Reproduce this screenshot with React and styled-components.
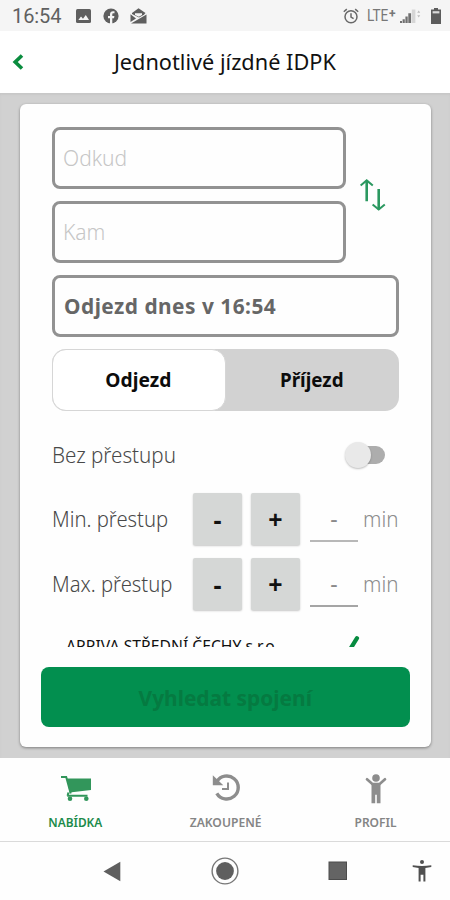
import { useState } from "react"
import styled, { createGlobalStyle } from "styled-components"

const GlobalStyle = createGlobalStyle`
  * {
    box-sizing: border-box;
  }

  body {
    margin: 0;
    background: #fefefe;
    font-family: "Noto Sans", "Open Sans", sans-serif;
  }

  button, input {
    font-family: inherit;
    padding: 0;
    margin: 0;
    outline: none;
  }
`

const Screen = styled.div`
  width: 450px;
  height: 900px;
  display: flex;
  flex-direction: column;
  overflow: hidden;
  background: #fefefe;
`

const Label = styled.span`
  display: inline-block;
  white-space: nowrap;
  transform: scaleX(${({ $sx }) => $sx || 1});
  transform-origin: ${({ $from }) => $from || "center"};
`

const StatusBar = styled.div`
  height: 31px;
  flex-shrink: 0;
  background: #f5f5f5;
  display: flex;
  align-items: center;
  justify-content: space-between;
  padding: 1px 9px 0 12px;
  color: #606060;
  font-family: Roboto, sans-serif;
`

const StatusGroup = styled.div`
  display: flex;
  align-items: center;

  svg {
    display: block;
  }
`

const Clock = styled.div`
  width: 64px;
  font-size: 20px;
  line-height: 30px;
  letter-spacing: -0.1px;
`

const Network = styled.div`
  width: 33px;
  margin-left: 8px;
  font-size: 16px;
  line-height: 30px;
  color: #777;
  display: flex;

  sup {
    font-size: 12px;
    line-height: 27px;
    font-weight: 700;
    margin-left: -3px;
  }
`

const Header = styled.header`
  height: 62px;
  flex-shrink: 0;
  display: grid;
  grid-template-columns: 36px 1fr 36px;
  align-items: center;
  background: #fff;

  h1 {
    margin: 0;
    text-align: center;
    font-size: 21.5px;
    font-weight: 400;
    line-height: 30px;
    color: #111;
  }
`

const BackButton = styled.button`
  border: 0;
  background: none;
  padding-left: 11px;
  height: 40px;
  display: flex;
  align-items: center;
`

const Main = styled.main`
  height: 665px;
  flex-shrink: 0;
  padding: 11px 19px 11px 20px;
  background: #d1d1d1;
  box-shadow: inset 0 2px 2px #c8c8c8;
`

const Card = styled.div`
  height: 643px;
  background: #fefefe;
  border-radius: 6px;
  box-shadow: 0 1px 3px rgba(0, 0, 0, 0.4);
  display: flex;
  flex-direction: column;
`

const ScrollArea = styled.div`
  height: 543px;
  overflow: hidden;
  padding: 22.5px 32px 0;
`

const Route = styled.div`
  display: flex;
  align-items: center;
  gap: 14px;
`

const RouteFields = styled.div`
  width: 294px;
  display: grid;
  gap: 12px;
`

const Field = styled.div`
  height: 62px;
  border: 3px solid #929292;
  border-radius: 8px;
  padding: 1px 7px 0 8px;
  display: flex;
  align-items: center;
  font-size: 21px;
  font-weight: 300;
  background: #fefefe;

  input {
    width: 100%;
    border: 0;
    background: none;
    font-size: inherit;
    font-weight: inherit;

    &::placeholder {
      color: #c6c6c6;
      opacity: 1;
    }
  }
`

const DepartureField = styled(Field)`
  margin-top: 12px;
  padding: 0 9px 1px;
  font-size: 21.5px;
  font-weight: 700;
  letter-spacing: 0.5px;
  color: #666;
`

const SwapButton = styled.button`
  border: 0;
  background: none;
  height: 32px;
`

const Segmented = styled.div`
  height: 62px;
  margin: 12px 0;
  border-radius: 14px;
  background: #d2d2d2;
  display: grid;
  grid-template-columns: 1fr 1fr;
`

const Segment = styled.button`
  border: 1px solid ${({ $active }) => ($active ? "#d6d6d6" : "transparent")};
  border-radius: 14px;
  background: ${({ $active }) => ($active ? "#fff" : "transparent")};
  font-size: 20px;
  font-weight: 700;
  color: #0c0c0c;
`

const Row = styled.div`
  height: ${({ $h }) => $h}px;
  display: flex;
  align-items: center;
  font-size: 21px;
  font-weight: 300;
  color: #484848;
`

const RowLabel = styled.div`
  width: 141px;
`

const Switch = styled.button`
  margin-left: auto;
  margin-right: 14px;
  width: 40px;
  height: 26px;
  border: 0;
  background: none;
  display: flex;
  align-items: center;

  &::before {
    content: "";
    width: 26px;
    height: 26px;
    flex-shrink: 0;
    border-radius: 50%;
    background: #e9e9e9;
    box-shadow: 0 1px 2px rgba(0, 0, 0, 0.25);
    z-index: 1;
  }

  &::after {
    content: "";
    width: 30px;
    height: 18px;
    flex-shrink: 0;
    margin-left: -16px;
    border-radius: 9px;
    background: #adadad;
  }
`

const Steppers = styled.div`
  display: grid;
  gap: 13px;
  padding-top: 6px;
`

const StepButton = styled.button`
  width: 49px;
  height: 52px;
  margin-right: 9px;
  border: 0;
  border-radius: 2px;
  background: #d5d7d6;
  box-shadow: 0 1px 2px rgba(0, 0, 0, 0.22);
  display: flex;
  align-items: center;
  justify-content: center;
  font-size: 25px;
  font-weight: 700;
  line-height: 30px;
  color: #111;
`

const Minutes = styled.div`
  width: 48px;
  height: 44px;
  margin: 2px 5px 0 1px;
  padding-bottom: 2px;
  border-bottom: 2px solid ${({ $dark }) => ($dark ? "#a5a5a5" : "#b8b8b8")};
  display: flex;
  align-items: center;
  justify-content: center;
  font-size: 23px;
  font-weight: 400;
  color: #8a8a8a;
`

const Unit = styled.div`
  color: #8c8c8c;
`

const Operator = styled.div`
  display: flex;
  align-items: flex-start;
  justify-content: space-between;
  padding: 25px 39px 0 14px;
  font-size: 16px;
  line-height: 22px;
  color: #111;
`

const Submit = styled.button`
  height: 60px;
  margin: 20px 21px 0 21px;
  border: 0;
  border-radius: 8px;
  background: #028f4f;
  font-size: 22px;
  font-weight: 700;
  color: #057a41;
`

const TabBar = styled.nav`
  height: 84px;
  flex-shrink: 0;
  display: grid;
  grid-template-columns: repeat(3, 1fr);
  border-bottom: 1px solid #dadada;
`

const Tab = styled.div`
  display: grid;
  grid-template-rows: 41px 18px;
  justify-items: center;
  align-content: start;
  padding: 15px 0 0 1px;
  font-size: 12px;
  font-weight: 600;
  line-height: 18px;
  color: ${({ $active }) => ($active ? "#1c8b4b" : "#858585")};

  svg {
    display: block;
  }
`

const SystemBar = styled.div`
  height: 58px;
  display: grid;
  grid-template-columns: 168px 114px 112px 56px;
  align-items: center;

  svg {
    display: block;
    justify-self: center;
  }

  svg:first-child {
    justify-self: end;
    margin-right: 47px;
  }
`

const PhotoIcon = () => (
  <svg width="15" height="14" viewBox="0 0 15 14">
    <rect width="15" height="14" rx="1.5" fill="#5f5f5f" />
    <path d="M2.3 11 5 7.4l2 2.3L9.8 6 13 11z" fill="#f5f5f5" />
  </svg>
)

const FacebookIcon = styled(({ className }) => (
  <svg className={className} width="16" height="16" viewBox="0 0 16 16">
    <circle cx="8" cy="8" r="7.6" fill="#5f5f5f" />
    <path d="M7 16v-5.8H5V8h2V6.3C7 4.2 8.2 3.2 10 3.2h1.5v2H10.4c-.8 0-1.1.4-1.1 1.1V8h2.1l-.4 2.2H9.3V16z" fill="#f5f5f5" />
  </svg>
))`
  margin-left: 12px;
`

const MailIcon = styled(({ className }) => (
  <svg className={className} width="17" height="16" viewBox="0 0 17 16">
    <path d="M8.5.3 15.5 5 14 6.8 9 9.6 2 6V5z" fill="#5f5f5f" />
    <path d="M5 5.2h7v1.8L8.8 8.8 5 7z" fill="#f5f5f5" />
    <path d="M.5 6.2 6 10.6.5 14z" fill="#5f5f5f" />
    <path d="M1 15.6 16.5 6.5v9.1z" fill="#5f5f5f" />
  </svg>
))`
  margin-left: 11px;
`

const AlarmIcon = () => (
  <svg width="16" height="16" viewBox="0 0 16 16" fill="none" stroke="#686868" strokeWidth="1.5">
    <circle cx="8" cy="8.8" r="6" />
    <path d="M8 5.2v3.9l2.6 1.6M.8 3.8 3.8 1.1M15.2 3.8l-3-2.7" />
  </svg>
)

const SignalIcon = () => (
  <svg width="22" height="16" viewBox="0 0 22 16">
    <path d="M0 13h2v2H0zM2.6 11.3h2.2V15H2.6zM5.4 8.6h2.3V15H5.4zM8.3 5.2h2.8V15H8.3z" fill="#707070" />
    <path d="M11.8 1.5h3.6V15h-3.6z" fill="#d6d6d6" />
    <path d="M17.2 4.8 18.7 2.5l1.5 2.3zM17.2 7.2h3l-1.5 2.3z" fill="#bcbcbc" />
  </svg>
)

const BatteryIcon = styled(({ className }) => (
  <svg className={className} width="10" height="16" viewBox="0 0 10 16">
    <path d="M3 0h4v1.5h3V16H0V1.5h3z" fill="#5c5c5c" />
    <path d="M1.6 3.2h6.8v2.2H1.6z" fill="#d9d9d9" />
  </svg>
))`
  margin-left: 9px;
`

const ChevronIcon = () => (
  <svg width="14" height="16" viewBox="0 0 14 16" fill="none" stroke="#0a8c3e" strokeWidth="3.6">
    <path d="M11 1.5 4.2 8l6.8 6.5" />
  </svg>
)

const SwapIcon = () => (
  <svg width="26" height="32" viewBox="0 0 26 32" fill="none" stroke="#2b9860" strokeWidth="2">
    <path d="M6.7 1.6v20.6M18.7 10v20.4" strokeWidth="2.6" />
    <path d="M.6 6.5 6.7 1.4l6.1 5.1M12.6 25.4l6.1 5.1 6.1-5.1" />
  </svg>
)

const CheckIcon = () => (
  <svg width="20" height="18" viewBox="0 0 20 18">
    <path d="M17 3.2 9.8 14.8 4 16" fill="none" stroke="#078b40" strokeWidth="4.2" strokeLinejoin="round" strokeLinecap="round" />
  </svg>
)

const CartIcon = () => (
  <svg width="32" height="30" viewBox="0 0 32 30">
    <path d="M1 4.1h5.2l4.5 16.5M8.4 19.5l-.8 3.3M7.2 22.8h20.3" fill="none" stroke="#32965b" strokeWidth="2" />
    <path d="M6.8 5.5H31V17L9.7 19.5z" fill="#32965b" />
    <circle cx="10" cy="25.7" r="2.3" fill="#32965b" />
    <circle cx="26.3" cy="25.7" r="2.3" fill="#32965b" />
  </svg>
)

const HistoryIcon = () => (
  <svg width="28" height="30" viewBox="0 0 28 30" fill="none" stroke="#8d8d8d">
    <path d="M4.8 8.7A11.5 11.5 0 1 1 4.8 20.3" strokeWidth="3.4" />
    <path d="M.8 2.2v10h10.5z" fill="#8d8d8d" stroke="none" />
    <path d="M16 9.5v6.6h-6" strokeWidth="2" />
  </svg>
)

const PersonIcon = () => (
  <svg width="22" height="32" viewBox="0 0 22 32">
    <circle cx="11" cy="5" r="3.8" fill="#8d8d8d" />
    <path d="M2 6.3 7.3 11h7.4L20 6.3" fill="none" stroke="#8d8d8d" strokeWidth="2.7" strokeLinecap="round" />
    <path d="M6.5 10h9v20.3h-3.7v-8.6h-1.6v8.6H6.5z" fill="#8d8d8d" />
  </svg>
)

const TriangleIcon = () => (
  <svg width="18" height="21" viewBox="0 0 18 21">
    <path d="M17.3.8v19.4L.5 10.5z" fill="#5f5f5f" />
  </svg>
)

const HomeIcon = () => (
  <svg width="28" height="28" viewBox="0 0 28 28">
    <circle cx="14" cy="14" r="12.9" fill="none" stroke="#777" strokeWidth="1.4" />
    <circle cx="14" cy="14" r="8.9" fill="#5f5f5f" />
  </svg>
)

const SquareIcon = () => (
  <svg width="20" height="20" viewBox="0 0 20 20">
    <rect x="1" y="1" width="17.5" height="17.5" fill="#646464" stroke="#4c4c4c" />
  </svg>
)

const AccessibilityIcon = () => (
  <svg width="20" height="22" viewBox="0 0 20 22" fill="#505050">
    <circle cx="10" cy="2" r="2" />
    <path d="M.7 5.2Q10 6.8 19.3 5.2v1.7L13.4 8v13.6h-2v-6.9H8.6v6.9h-2V8L.7 6.9z" />
  </svg>
)

function Stepper({ label, dark }) {
  const [value, setValue] = useState(null)

  return (
    <Row $h={52}>
      <RowLabel>
        <Label $sx={0.965} $from="left">{label}</Label>
      </RowLabel>
      <StepButton onClick={() => setValue(value ? value - 1 : null)}>-</StepButton>
      <StepButton onClick={() => setValue((value || 0) + 1)}>+</StepButton>
      <Minutes $dark={dark}>{value ?? "-"}</Minutes>
      <Unit>
        <Label $sx={0.98} $from="left">min</Label>
      </Unit>
    </Row>
  )
}

export default function App() {
  const [direction, setDirection] = useState("departure")

  return (
    <Screen>
      <GlobalStyle />
      <StatusBar>
        <StatusGroup>
          <Clock>16:54</Clock>
          <PhotoIcon />
          <FacebookIcon />
          <MailIcon />
        </StatusGroup>
        <StatusGroup>
          <AlarmIcon />
          <Network>
            <Label $sx={0.85} $from="left">LTE</Label>
            <sup>+</sup>
          </Network>
          <SignalIcon />
          <BatteryIcon />
        </StatusGroup>
      </StatusBar>

      <Header>
        <BackButton>
          <ChevronIcon />
        </BackButton>
        <h1>
          <Label $sx={1.01}>Jednotlivé jízdné IDPK</Label>
        </h1>
      </Header>

      <Main>
        <Card>
          <ScrollArea>
            <Route>
              <RouteFields>
                <Field>
                  <input placeholder="Odkud" />
                </Field>
                <Field>
                  <input placeholder="Kam" />
                </Field>
              </RouteFields>
              <SwapButton>
                <SwapIcon />
              </SwapButton>
            </Route>

            <DepartureField>
              <Label $sx={0.97} $from="left">Odjezd dnes v 16:54</Label>
            </DepartureField>

            <Segmented>
              <Segment $active={direction === "departure"} onClick={() => setDirection("departure")}>
                <Label $sx={0.96}>Odjezd</Label>
              </Segment>
              <Segment $active={direction === "arrival"} onClick={() => setDirection("arrival")}>
                <Label $sx={0.94}>Příjezd</Label>
              </Segment>
            </Segmented>

            <Row $h={64}>
              <Label $sx={0.98} $from="left">Bez přestupu</Label>
              <Switch />
            </Row>
            <Steppers>
              <Stepper label="Min. přestup" />
              <Stepper label="Max. přestup" dark />
            </Steppers>

            <Operator>
              <Label $sx={0.98} $from="left">ARRIVA STŘEDNÍ ČECHY s.r.o.</Label>
              <CheckIcon />
            </Operator>
          </ScrollArea>

          <Submit>
            <Label $sx={0.95}>Vyhledat spojení</Label>
          </Submit>
        </Card>
      </Main>

      <TabBar>
        <Tab $active>
          <CartIcon />
          <Label $sx={0.99}>NABÍDKA</Label>
        </Tab>
        <Tab>
          <HistoryIcon />
          <Label $sx={1.01}>ZAKOUPENÉ</Label>
        </Tab>
        <Tab>
          <PersonIcon />
          <Label $sx={1}>PROFIL</Label>
        </Tab>
      </TabBar>

      <SystemBar>
        <TriangleIcon />
        <HomeIcon />
        <SquareIcon />
        <AccessibilityIcon />
      </SystemBar>
    </Screen>
  )
}
